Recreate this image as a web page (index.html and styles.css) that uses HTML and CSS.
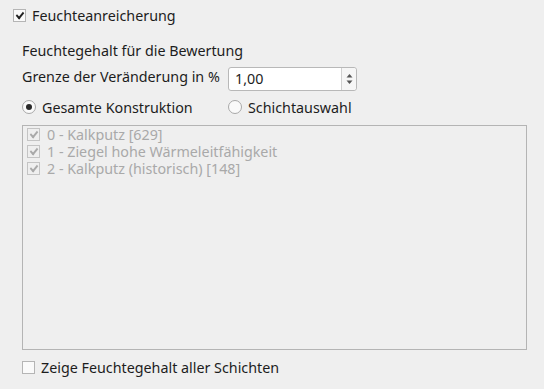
FILE: index.html
```html
<!DOCTYPE html>
<html lang="de">

<head>
    <meta charset="utf-8">
    <link rel="stylesheet" href="styles.css">
</head>

<body>
    <div id="panel">
        <label class="check top">
            <span class="box checked"></span>
            <span>Feuchteanreicherung</span>
        </label>
        <div id="group">
            <div class="heading">Feuchtegehalt für die Bewertung</div>
            <div class="row">
                <span class="label">Grenze der Veränderung in %</span>
                <div class="spin">
                    <span class="value">1,00</span>
                    <span class="arrows">
                        <svg width="7" height="12" viewBox="0 0 7 12">
                            <path d="M0.5 4.5 L3.5 1 L6.5 4.5 Z" fill="#555" />
                            <path d="M0.5 7.5 L3.5 11 L6.5 7.5 Z" fill="#555" />
                        </svg>
                    </span>
                </div>
            </div>
            <div class="row radios">
                <label class="radio">
                    <span class="dot on"></span>
                    <span>Gesamte Konstruktion</span>
                </label>
                <label class="radio">
                    <span class="dot"></span>
                    <span>Schichtauswahl</span>
                </label>
            </div>
            <ul id="layers">
                <li><span class="box checked"></span>0 - Kalkputz [629]</li>
                <li><span class="box checked"></span>1 - Ziegel hohe Wärmeleitfähigkeit</li>
                <li><span class="box checked"></span>2 - Kalkputz (historisch) [148]</li>
            </ul>
            <label class="check bottom">
                <span class="box"></span>
                <span>Zeige Feuchtegehalt aller Schichten</span>
            </label>
        </div>
    </div>
</body>

</html>
```
FILE: styles.css
```css
html,
body {
    margin: 0;
    background-color: #efefef;
}

body {
    font-family: "Noto Sans", sans-serif;
    font-size: 14.3px;
    color: #1d1d1d;
}

#panel {
    width: 544px;
    height: 389px;
    padding: 6px 0 0 13px;
    box-sizing: border-box;
}

.check {
    display: flex;
    align-items: center;
    gap: 6px;
    height: 18px;
}

.box {
    width: 11px;
    height: 11px;
    border: 1px solid #b5b5b5;
    background-color: #fafafa;
    position: relative;
    flex-shrink: 0;
}

.box.checked::after {
    content: "";
    position: absolute;
    left: 2px;
    top: 1px;
    width: 6px;
    height: 3px;
    border-left: 2px solid #222;
    border-bottom: 2px solid #222;
    transform: translate(0px, 1px) rotate(-50deg) skewX(-8deg);
    transform-origin: center;
}

#group {
    padding: 17px 0 0 9px;
    width: 505px;
}

.heading {
    height: 20px;
    line-height: 20px;
}

.row {
    display: flex;
    align-items: center;
}

.label {
    width: 206px;
}

.spin {
    margin-top: 6px;
    width: 127px;
    height: 22px;
    border: 1px solid #b8b8b8;
    border-radius: 3px;
    background-color: #fff;
    display: flex;
}

.value {
    flex: 1;
    padding-left: 6px;
    line-height: 22px;
}

.arrows {
    width: 14px;
    border-left: 1px solid #d0d0d0;
    background-color: #f6f6f6;
    border-radius: 0 3px 3px 0;
    display: flex;
    align-items: center;
    justify-content: center;
}

.radios {
    margin-top: 5px;
    height: 22px;
}

.radio {
    display: flex;
    align-items: center;
    gap: 6px;
    width: 206px;
}

.dot {
    width: 12px;
    height: 12px;
    border: 1px solid #a8a8a8;
    border-radius: 50%;
    background-color: #fafafa;
    position: relative;
}

.dot.on::after {
    content: "";
    position: absolute;
    left: 3px;
    top: 3px;
    width: 6px;
    height: 6px;
    border-radius: 50%;
    background-color: #2a2a2a;
}

#layers {
    list-style: none;
    margin: 7px 0 0 0;
    padding: 0 4px;
    height: 223px;
    border: 1px solid #b4b4b4;
    color: #a9a9a9;
}

#layers li {
    display: flex;
    align-items: center;
    gap: 7px;
    height: 17px;
    line-height: 17px;
}

#layers .box {
    border-color: #c4c4c4;
    background-color: transparent;
}

#layers .box.checked::after {
    border-color: #a9a9a9;
}

.check.bottom {
    margin-top: 8px;
}
```
